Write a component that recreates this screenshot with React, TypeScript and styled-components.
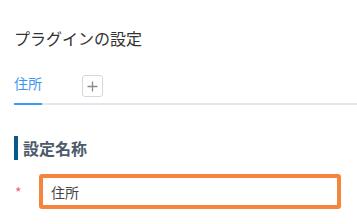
import React from "react";
import styled, { createGlobalStyle } from "styled-components";

const Global = createGlobalStyle`
  html, body { margin: 0; padding: 0; background: #fff; }
  body { font-family: "Noto Sans CJK JP", "Noto Sans", sans-serif; }
`;

const Page = styled.div`
  padding: 27px 0 0 14px;
  box-sizing: border-box;
  width: 357px;
  height: 224px;
  overflow: hidden;
`;

const Title = styled.h1`
  margin: 0;
  font-size: 16px;
  font-weight: 400;
  line-height: 22px;
  color: #333;
`;

const TabBar = styled.div`
  display: flex;
  align-items: flex-start;
  margin-top: 22px;
  border-bottom: 2px solid #e3e7eb;
`;

const Tab = styled.div<{ $active?: boolean }>`
  font-size: 14px;
  line-height: 20px;
  padding: 2px 0 10px;
  color: ${(p) => (p.$active ? "#3b96f0" : "#333")};
  border-bottom: 2px solid ${(p) => (p.$active ? "#3b9cf5" : "transparent")};
  margin-bottom: -2px;
`;

const AddButton = styled.button`
  margin: 4px 0 0 40px;
  width: 21px;
  height: 22px;
  padding: 0;
  border: 1px solid #d6d6e0;
  border-radius: 3px;
  background: #fff;
  display: flex;
  align-items: center;
  justify-content: center;
`;

const Section = styled.div`
  margin-top: 31px;
`;

const Heading = styled.h2`
  margin: 0;
  height: 24px;
  line-height: 24px;
  border-left: 4px solid #07598e;
  padding-left: 5px;
  font-size: 16px;
  font-weight: 700;
  color: #4d5a6b;
`;

const Row = styled.div`
  display: flex;
  align-items: center;
  margin-top: 14px;
`;

const Required = styled.span`
  width: 24px;
  color: #f0607a;
  font-size: 14px;
  line-height: 14px;
  padding-left: 1px;
`;

const TextInput = styled.input`
  box-sizing: border-box;
  width: 302px;
  height: 35px;
  border: 4px solid #f5843c;
  border-radius: 3px;
  padding: 0 0 0 8px;
  font-family: "Noto Sans CJK JP", "Noto Sans", sans-serif;
  font-size: 14px;
  color: #444;
  outline: none;
  background: #fff;
`;

export default function App() {
  return (
    <>
      <Global />
      <Page>
        <Title>プラグインの設定</Title>
        <TabBar>
          <Tab $active>住所</Tab>
          <AddButton aria-label="追加">
            <svg width="11" height="11" viewBox="0 0 11 11">
              <path d="M5.5 0.5v10M0.5 5.5h10" stroke="#8a8a8a" strokeWidth="1.3" fill="none" />
            </svg>
          </AddButton>
        </TabBar>
        <Section>
          <Heading>設定名称</Heading>
          <Row>
            <Required>*</Required>
            <TextInput defaultValue="住所" />
          </Row>
        </Section>
      </Page>
    </>
  );
}
